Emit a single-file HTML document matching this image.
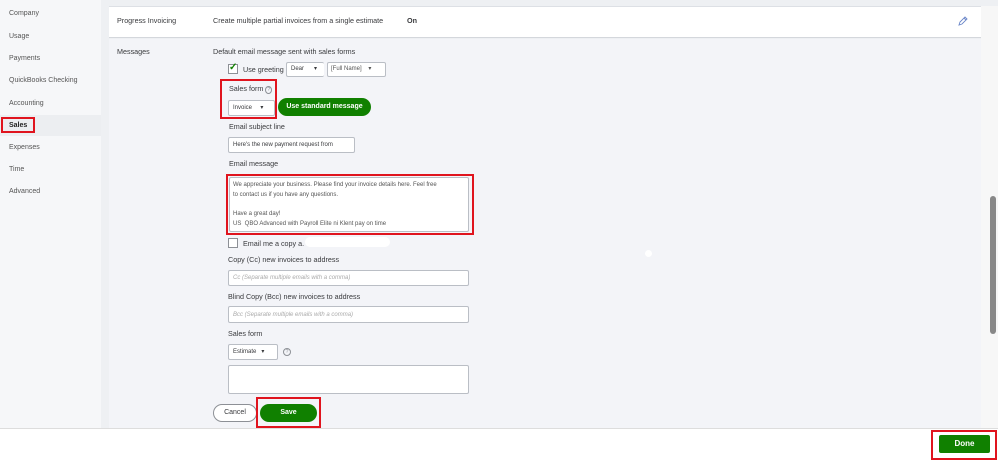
<!DOCTYPE html>
<html><head><meta charset="utf-8"><style>
*{box-sizing:border-box;margin:0;padding:0}
body{width:998px;height:462px;overflow:hidden;background:#eef0f3;font-family:"Liberation Sans",sans-serif;font-size:7.2px;color:#393a3d;position:relative;line-height:1.2}
.a{position:absolute}
.side{left:0;top:0;width:101px;height:428px;background:#f6f7f9}
.nav{left:9px;font-size:7px;color:#555}
.inp{background:#fff;border:1px solid #babec5;border-radius:2px}
.lbl{font-size:7.2px;color:#393a3d}
.red{border:2px solid #e0141e}
.ph{font-style:italic;color:#aaa;font-size:6px}
.btn{background:#108000;color:#fff;font-weight:bold;border-radius:10px;display:flex;align-items:center;justify-content:center}
</style></head><body>
<div class="a side"></div>
<div class="a" style="left:0;top:115px;width:101px;height:21px;background:#eceef1"></div>
<div class="a nav" style="top:10px">Company</div>
<div class="a nav" style="top:33px">Usage</div>
<div class="a nav" style="top:55px">Payments</div>
<div class="a nav" style="top:77px">QuickBooks Checking</div>
<div class="a nav" style="top:100px">Accounting</div>
<div class="a red" style="left:1px;top:117px;width:34px;height:16px"></div>
<div class="a nav" style="top:122px;color:#222;font-weight:bold">Sales</div>
<div class="a nav" style="top:144px">Expenses</div>
<div class="a nav" style="top:166px">Time</div>
<div class="a nav" style="top:188px">Advanced</div>

<div class="a" style="left:109px;top:6px;width:872px;height:32px;background:#fff;border-top:1px solid #dde0e5;border-bottom:1px solid #d4d7dc"></div>
<div class="a" style="left:109px;top:39px;width:872px;height:389px;background:#f3f4f8"></div>
<div class="a lbl" style="left:117px;top:17px">Progress Invoicing</div>
<div class="a lbl" style="left:213px;top:17px">Create multiple partial invoices from a single estimate</div>
<div class="a lbl" style="left:407px;top:17px;font-weight:bold">On</div>
<svg class="a" style="left:958px;top:16px" width="10" height="10" viewBox="0 0 10 10"><path d="M1 9 L2 6 L7 1 L9 3 L4 8 Z M6 2 L8 4" fill="none" stroke="#6a86c8" stroke-width="0.9"/></svg>

<div class="a lbl" style="left:117px;top:48px">Messages</div>
<div class="a lbl" style="left:213px;top:48px">Default email message sent with sales forms</div>
<div class="a" style="left:228px;top:64px;width:10px;height:10px;border:1px solid #8d9096;background:#fff"></div>
<div class="a" style="left:229px;top:62px;color:#108000;font-size:10px;font-weight:bold">✓</div>
<div class="a lbl" style="left:243px;top:66px">Use greeting</div>
<div class="a inp" style="left:286px;top:62px;width:38px;height:15px;border-right:none"></div>
<div class="a" style="left:291px;top:66px;font-size:6px">Dear &nbsp;&nbsp;&nbsp;&nbsp;&nbsp;▾</div>
<div class="a inp" style="left:327px;top:62px;width:59px;height:15px"></div>
<div class="a" style="left:331px;top:66px;font-size:6px;color:#555">[Full Name] &nbsp;&nbsp;&nbsp;▾</div>

<div class="a red" style="left:220px;top:79px;width:57px;height:40px"></div>
<div class="a lbl" style="left:229px;top:85px">Sales form <span style="color:#8d9096;border:1px solid #8d9096;border-radius:50%;font-size:5px;padding:0 1px">?</span></div>
<div class="a inp" style="left:228px;top:100px;width:47px;height:16px"></div>
<div class="a" style="left:233px;top:105px;font-size:6px">Invoice &nbsp;&nbsp;&nbsp;&nbsp;▾</div>
<div class="a btn" style="left:278px;top:98px;width:93px;height:18px;font-size:7px">Use standard message</div>

<div class="a lbl" style="left:229px;top:123px">Email subject line</div>
<div class="a inp" style="left:228px;top:137px;width:127px;height:16px"></div>
<div class="a" style="left:233px;top:142px;font-size:6px">Here's the new payment request from</div>
<div class="a lbl" style="left:229px;top:160px">Email message</div>
<div class="a red" style="left:226px;top:174px;width:248px;height:61px"></div>
<div class="a inp" style="left:229px;top:177px;width:240px;height:55px"></div>
<div class="a" style="left:233px;top:181px;font-size:6px;line-height:9.7px;color:#555">We appreciate your business. Please find your invoice details here. Feel free<br>to contact us if you have any questions.<br><br>Have a great day!<br>US &nbsp;QBO Advanced with Payroll Elite ni Klent pay on time</div>

<div class="a" style="left:228px;top:238px;width:10px;height:10px;border:1px solid #8d9096;background:#fff"></div>
<div class="a lbl" style="left:243px;top:240px">Email me a copy a.</div>
<div class="a" style="left:305px;top:237px;width:85px;height:10px;background:#fff;border-radius:5px"></div>
<div class="a lbl" style="left:228px;top:256px">Copy (Cc) new invoices to address</div>
<div class="a inp" style="left:228px;top:270px;width:241px;height:16px"></div>
<div class="a ph" style="left:233px;top:275px">Cc (Separate multiple emails with a comma)</div>
<div class="a lbl" style="left:228px;top:293px">Blind Copy (Bcc) new invoices to address</div>
<div class="a inp" style="left:228px;top:306px;width:241px;height:17px"></div>
<div class="a ph" style="left:233px;top:312px">Bcc (Separate multiple emails with a comma)</div>
<div class="a lbl" style="left:228px;top:330px">Sales form</div>
<div class="a inp" style="left:228px;top:344px;width:50px;height:16px"></div>
<div class="a" style="left:233px;top:349px;font-size:6px">Estimate &nbsp;&nbsp;▾</div>
<div class="a" style="left:283px;top:348px;width:8px;height:8px;border:1px solid #8d9096;border-radius:50%;font-size:5px;color:#8d9096;text-align:center;line-height:7px">?</div>
<div class="a inp" style="left:228px;top:365px;width:241px;height:29px"></div>
<div class="a" style="left:213px;top:404px;width:44px;height:18px;border:1px solid #8d9096;border-radius:9px;background:#fff;display:flex;align-items:center;justify-content:center;font-size:7px">Cancel</div>
<div class="a red" style="left:256px;top:397px;width:65px;height:31px"></div>
<div class="a btn" style="left:260px;top:404px;width:57px;height:18px;font-size:7px">Save</div>
<div class="a" style="left:645px;top:250px;width:7px;height:7px;border-radius:50%;background:#fff"></div>

<div class="a" style="left:981px;top:6px;width:17px;height:422px;background:#f7f7f7"></div>
<div class="a" style="left:990px;top:196px;width:6px;height:138px;background:#888;border-radius:3px"></div>
<div class="a" style="left:0;top:428px;width:998px;height:34px;background:#fff;border-top:1px solid #ddd"></div>
<div class="a red" style="left:931px;top:430px;width:66px;height:30px"></div>
<div class="a" style="left:939px;top:435px;width:51px;height:18px;background:#108000;color:#fff;font-weight:bold;border-radius:2px;display:flex;align-items:center;justify-content:center;font-size:8px">Done</div>
</body></html>
